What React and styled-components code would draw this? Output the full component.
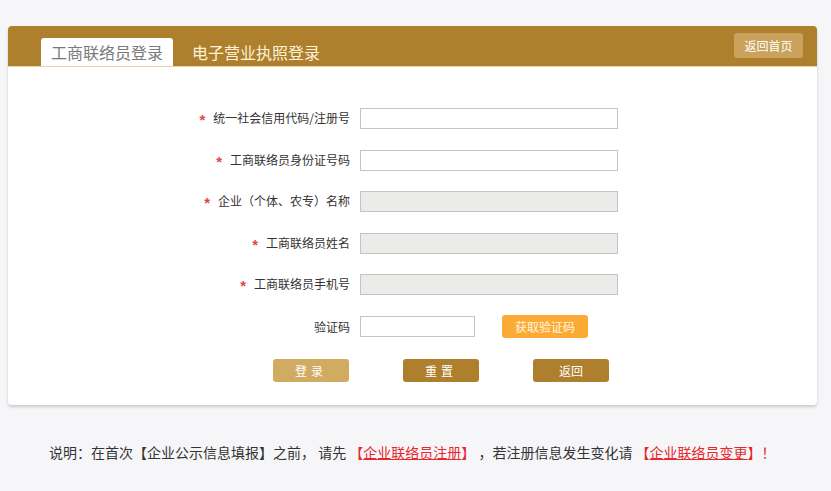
import React from "react";
import styled, { createGlobalStyle } from "styled-components";

const GlobalStyle = createGlobalStyle`
  html, body {
    margin: 0;
    padding: 0;
    background: #f6f6f8;
    font-family: "Liberation Sans", "Noto Sans CJK SC", sans-serif;
  }
`;

const Page = styled.div`
  padding: 26px 14px 0 8px;
`;

// main card
const Card = styled.div`
  background: #fff;
  border-radius: 4px;
  box-shadow: 0 2px 3px rgba(0, 0, 0, 0.18);
  padding-bottom: 23px;
`;

// brown header with tabs
const Header = styled.div`
  height: 41px;
  background: #ae802e;
  border-radius: 4px 4px 0 0;
  border-bottom: 1px solid #e9d3a3;
  box-sizing: border-box;
  display: flex;
  align-items: flex-end;
  padding: 0 14px 0 33px;
`;

const Tab = styled.div`
  height: 28px;
  padding: 0 10px;
  margin-right: 9px;
  border-radius: 3px 3px 0 0;
  display: flex;
  align-items: center;
  font-family: "Noto Sans CJK SC", sans-serif;
  font-size: 16px;
  background: ${({ active }) => (active ? "#fff" : "transparent")};
  color: ${({ active }) => (active ? "#7a7a7a" : "#fdf2d8")};
`;

const HomeButton = styled.button`
  margin-left: auto;
  align-self: center;
  margin-bottom: 2px;
  width: 69px;
  height: 25px;
  border: none;
  border-radius: 3px;
  background: #caa25b;
  color: #fff;
  font-family: "Noto Sans CJK SC", sans-serif;
  font-size: 12px;
  padding: 0;
`;

const Form = styled.div`
  padding-top: 41px;
  display: flex;
  flex-direction: column;
  gap: 20.5px;
`;

const Row = styled.div`
  display: flex;
  align-items: center;
  height: 21px;
`;

const Label = styled.label`
  flex: 0 0 352px;
  box-sizing: border-box;
  padding-right: 10px;
  text-align: right;
  font-family: "Noto Sans CJK SC", sans-serif;
  font-size: 12px;
  color: #333;
  line-height: 21px;
`;

const Star = styled.span`
  color: #e0473f;
  font-family: "Liberation Sans", sans-serif;
  font-weight: bold;
  font-size: 15px;
  margin-right: 8px;
  vertical-align: -2px;
`;

const Input = styled.input`
  box-sizing: border-box;
  width: ${({ w }) => w || 258}px;
  height: 21px;
  border: 1px solid #c4c4c4;
  background: ${({ disabled }) => (disabled ? "#ebebe9" : "#fff")};
  margin: 0;
  padding: 0 4px;
`;

const CodeButton = styled.button`
  margin-left: 27px;
  width: 86px;
  height: 23px;
  border: none;
  border-radius: 3px;
  background: #fbab33;
  color: #fff6e4;
  font-family: "Noto Sans CJK SC", sans-serif;
  font-size: 12px;
  padding: 0;
`;

const Actions = styled.div`
  display: flex;
  gap: 54px;
  padding-left: 265px;
  margin-top: 22px;
`;

const ActionButton = styled.button`
  width: 76px;
  height: 23px;
  border: none;
  border-radius: 3px;
  background: ${({ light }) => (light ? "#d2ab63" : "#ae802d")};
  color: #fff;
  font-family: "Noto Sans CJK SC", sans-serif;
  font-size: 12px;
  letter-spacing: ${({ spaced }) => (spaced ? "4px" : "0")};
  padding: 0;
`;

const Note = styled.p`
  margin: 37px 0 0 41px;
  font-family: "Noto Sans CJK SC", sans-serif;
  font-size: 14px;
  color: #333;
  white-space: nowrap;
`;

const Red = styled.span`
  color: #e8262d;
`;

const Link = styled.a`
  color: #e8262d;
  text-decoration: underline;
`;

const fields = [
  { label: "统一社会信用代码/注册号" },
  { label: "工商联络员身份证号码" },
  { label: "企业（个体、农专）名称", disabled: true },
  { label: "工商联络员姓名", disabled: true },
  { label: "工商联络员手机号", disabled: true },
];

export default function App() {
  return (
    <Page>
      <GlobalStyle />
      <Card>
        <Header>
          <Tab active>工商联络员登录</Tab>
          <Tab>电子营业执照登录</Tab>
          <HomeButton>返回首页</HomeButton>
        </Header>
        <Form>
          {fields.map((f) => (
            <Row key={f.label}>
              <Label>
                <Star>*</Star>
                {f.label}
              </Label>
              <Input disabled={f.disabled} />
            </Row>
          ))}
          <Row>
            <Label>验证码</Label>
            <Input w={115} />
            <CodeButton>获取验证码</CodeButton>
          </Row>
        </Form>
        <Actions>
          <ActionButton light spaced>登录</ActionButton>
          <ActionButton spaced>重置</ActionButton>
          <ActionButton>返回</ActionButton>
        </Actions>
      </Card>
      <Note>
        说明：在首次【企业公示信息填报】之前， 请先{" "}
        <Red>
          【<Link>企业联络员注册</Link>】
        </Red>{" "}
        ，若注册信息发生变化请{" "}
        <Red>
          【<Link>企业联络员变更</Link>】！
        </Red>
      </Note>
    </Page>
  );
}
